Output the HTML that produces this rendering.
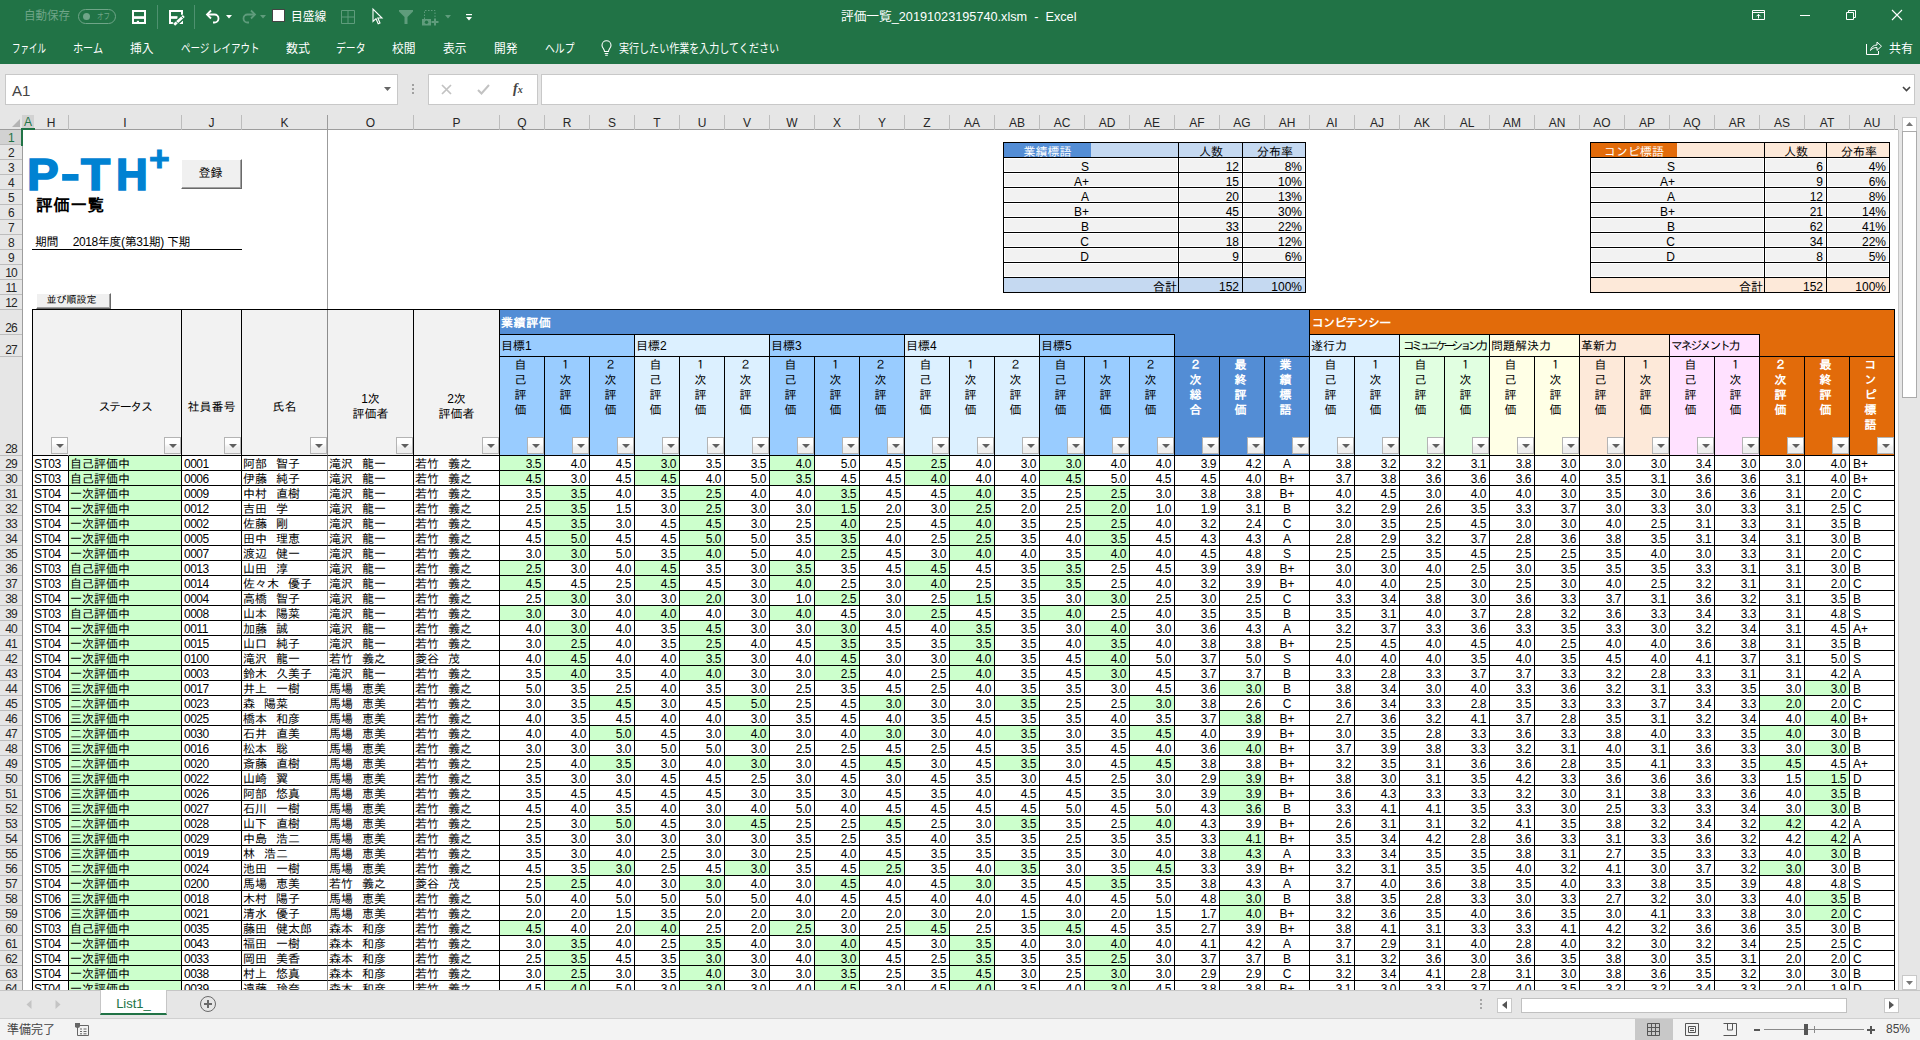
<!DOCTYPE html>
<html lang="ja"><head><meta charset="utf-8"><title>評価一覧_20191023195740.xlsm - Excel</title>
<style>

*{margin:0;padding:0;box-sizing:border-box}
html,body{width:1920px;height:1040px;overflow:hidden;background:#e6e6e6}
body{position:relative;font-family:"Liberation Sans","Noto Sans CJK JP",sans-serif;font-size:12px;color:#000}
.a{position:absolute}
#grn{left:0;top:0;width:1920px;height:64px;background:#217346;color:#fff}
#grn span{position:absolute;white-space:nowrap;line-height:16px}
#grn svg{position:absolute;overflow:visible}
.dim{color:#6fa588}
#fb{left:0;top:64px;width:1920px;height:49px;background:#e6e6e6}
.box{position:absolute;background:#fff;border:1px solid #c8c8c8}
#ch{left:0;top:113px;width:1898px;height:17px;background:#e6e6e6;border-bottom:1px solid #9d9d9d;font-family:"Liberation Sans","IPAGothic",sans-serif;color:#333}
#ch u{position:absolute;top:2px;height:15px;text-decoration:none;text-align:center;line-height:16px;color:#262626;border-right:1px solid #bdbdbd;font-size:12px}
#rh{left:0;top:130px;width:23px;height:860px;background:#e6e6e6;border-right:1px solid #9d9d9d;font-family:"Liberation Sans","IPAGothic",sans-serif;color:#333;overflow:hidden}
#rh u{position:absolute;left:0;width:22px;text-decoration:none;text-align:center;font-size:12px;line-height:11px;letter-spacing:-.8px;color:#262626;border-bottom:1px solid #bdbdbd;display:flex;align-items:flex-end;justify-content:center}
#sheet{left:23px;top:130px;width:1875px;height:860px;background:#fff;overflow:hidden;font-family:"Liberation Sans","IPAGothic",sans-serif}
#tb{position:absolute;left:9px;top:326px;width:1870px}
#tb p{display:flex;height:15px;border-left:1px solid #000;white-space:nowrap}
#tb b,#tb i{display:block;height:15px;border-right:1px solid #000;border-bottom:1px solid #000;font-weight:normal;font-style:normal;font-size:12px;line-height:17px;overflow:hidden;flex:none}
#tb b{padding-left:1px;width:86px;word-spacing:5.7px}
#tb b:nth-child(1){width:36px;letter-spacing:-.5px}
#tb b:nth-child(2){width:113px}
#tb b:nth-child(3){width:60px;padding-left:2px;letter-spacing:-.5px}
#tb b:nth-child(4){border-right-color:#8c8c8c}
#tb i{width:45px;text-align:right;padding-right:3px;letter-spacing:-.5px}
#tb i:nth-child(24){text-align:center;padding:0;letter-spacing:0}
#tb i:nth-child(37){text-align:left;padding:0 0 0 3px;letter-spacing:0}
.g{background:#cfc}
.hc{position:absolute;border-right:1px solid #000;border-bottom:1px solid #000;font-size:12px;line-height:15px;overflow:hidden}
.v{text-align:center;padding:1px 3px 0 0}
.w{color:#fff;font-weight:bold}
.f{position:absolute;right:0;bottom:1px;width:17px;height:17px;border:1px solid #b4b4b4;background:linear-gradient(#fff 35%,#eee 65%)}
.f:after{content:"";position:absolute;left:3.5px;top:6px;border:solid transparent;border-width:4px 4px 0;border-top-color:#606060}
.c1{background:#9cf}.c2{background:#dcf0ff}.c3{background:#538dd5}.c4{background:#e26b0a}
.c5{background:#e1ffe1}.c6{background:#ffffe6}.c7{background:#fde9d9}.c8{background:#ffe1ff}.c0{background:#f2f2f2}
.sm{position:absolute;font-size:12px}
.sm div{position:absolute;border-right:1px solid #000;border-bottom:1px solid #000;height:15px;line-height:19px;overflow:hidden;white-space:nowrap}
.sm .y{background:#f2f2f2;box-shadow:inset 0 0 0 1px #fff}
.btn{position:absolute;background:#f0f0f0;border:1px solid;border-color:#fff #696969 #696969 #fff;box-shadow:inset -1px -1px 0 #a0a0a0;text-align:center;white-space:nowrap}
#tabs{left:0;top:990px;width:1920px;height:28px;background:#e6e6e6;border-top:1px solid #c6c6c6}
#stat{left:0;top:1018px;width:1920px;height:22px;background:#f3f3f3;border-top:1px solid #d0d0d0;color:#444}
#vs{left:1898px;top:130px;width:22px;height:860px;background:#e6e6e6;border-left:1px solid #c6c6c6}

</style></head>
<body>
<div id="grn" class="a">
<span id="t1" class="dim" style="position:absolute;white-space:nowrap;left:24px;top:8px;transform-origin:0 50%;transform:scaleX(0.9580)">自動保存</span>
<div class="a" style="left:78px;top:9px;width:38px;height:15px;border:1px solid #6fa588;border-radius:8px"></div>
<div class="a" style="left:83px;top:13px;width:7px;height:7px;border-radius:4px;background:#6fa588"></div>
<span id="t2" class="dim" style="position:absolute;white-space:nowrap;left:97px;top:9px;transform-origin:0 50%;transform:scaleX(0.7640);font-size:8.5px;line-height:15px">オフ</span>
<svg style="left:132px;top:10px" width="14" height="14" viewBox="0 0 14 14"><rect x="1" y="1" width="12" height="12" fill="none" stroke="#fff" stroke-width="2"/><rect x="2" y="6.200" width="10" height="2.700" fill="#fff"/><rect x="4.800" y="10.800" width="2.200" height="2.200" fill="#fff"/></svg>
<div class="a" style="left:157px;top:5px;width:1px;height:24px;background:#4f9170"></div>
<svg style="left:169px;top:10px" width="16" height="16" viewBox="0 0 16 16"><path d="M13 5.500V1H1v12h4.500" fill="none" stroke="#fff" stroke-width="2"/><path d="M2 7.500h6.500" stroke="#fff" stroke-width="2.700"/><path d="M14 10.500V14h-4z" fill="#fff"/><path d="M14.800 6L5.200 14.800" stroke="#217346" stroke-width="5"/><path d="M14.800 6L5.200 14.800" stroke="#fff" stroke-width="2.800"/><path d="M12.300 6.300l2.200 2.400M7 11.200l2.200 2.400" stroke="#217346" stroke-width=".9"/></svg>
<div class="a" style="left:194px;top:5px;width:1px;height:24px;background:#4f9170"></div>
<svg style="left:205px;top:9px" width="16" height="15" viewBox="0 0 16 15"><path d="M2 5.5h7.5a4 4 0 0 1 0 8H8" fill="none" stroke="#fff" stroke-width="1.8"/><path d="M6 1.5L2 5.5l4 4" fill="none" stroke="#fff" stroke-width="1.8"/></svg>
<svg style="left:226px;top:15px" width="6" height="4" viewBox="0 0 6 4"><path d="M0 0h6L3 3.5z" fill="#fff"/></svg>
<svg style="left:241px;top:9px" width="16" height="15" viewBox="0 0 16 15"><path d="M14 5.5H6.5a4 4 0 0 0 0 8H8" fill="none" stroke="#5f9c7c" stroke-width="1.8"/><path d="M10 1.5l4 4-4 4" fill="none" stroke="#5f9c7c" stroke-width="1.8"/></svg>
<svg style="left:260px;top:15px" width="6" height="4" viewBox="0 0 6 4"><path d="M0 0h6L3 3.5z" fill="#5f9c7c"/></svg>
<div class="a" style="left:272px;top:9px;width:13px;height:13px;background:#fff;border:1px solid #444"></div>
<span id="t3" style="position:absolute;white-space:nowrap;left:290.5px;top:8.5px;transform-origin:0 50%;transform:scaleX(0.9774)">目盛線</span>
<svg style="left:341px;top:10px" width="14" height="14" viewBox="0 0 14 14"><path d="M.5.5h13v13H.5zM7 .5v13M.5 7h13" fill="none" stroke="#5f9c7c" stroke-width="1"/></svg>
<svg style="left:372px;top:8px" width="11" height="17" viewBox="0 0 11 17"><path d="M1 1v12.5l3-2.8 2.2 5 1.8-.8-2.2-4.9H10z" fill="none" stroke="#fff" stroke-width="1.1"/></svg>
<svg style="left:399px;top:10px" width="14" height="15" viewBox="0 0 14 15"><path d="M0 0h14v1.5L8.5 7v7h-3V7L0 1.5z" fill="#5f9c7c"/></svg>
<svg style="left:422px;top:10px" width="17" height="16" viewBox="0 0 17 16"><path d="M2.5 9V.5h10.5v7" fill="none" stroke="#5f9c7c" stroke-width="1" stroke-dasharray="1.5 1.5"/><rect x="0" y="9" width="9" height="6.5" fill="#5f9c7c"/><circle cx="4.5" cy="12.3" r="1.7" fill="#217346"/><path d="M13 8.5v7M9.5 12h7" stroke="#5f9c7c" stroke-width="2"/></svg>
<svg style="left:445px;top:15px" width="6" height="4" viewBox="0 0 6 4"><path d="M0 0h6L3 3.5z" fill="#5f9c7c"/></svg>
<svg style="left:465.500px;top:14px" width="6" height="7" viewBox="0 0 6 7"><path d="M0 .6h6" stroke="#fff" stroke-width="1.200"/><path d="M0 3h6L3 6.500z" fill="#fff"/></svg>
<span id="t4" style="position:absolute;white-space:nowrap;left:840.7px;top:8.5px;transform-origin:0 50%;transform:scaleX(1.0148);font-size:12.5px">評価一覧_20191023195740.xlsm&nbsp; -&nbsp; Excel</span>
<svg style="left:1752px;top:10px" width="13" height="10" viewBox="0 0 13 10"><path d="M.5.5h12v9H.5zM.5 2.500h12" fill="none" stroke="#fff" stroke-width="1"/><path d="M6.500 8.500V4.500M4.500 6.300l2-2 2 2" fill="none" stroke="#fff" stroke-width="1"/></svg>
<div class="a" style="left:1800px;top:15px;width:10px;height:1px;background:#fff"></div>
<svg style="left:1846px;top:10px" width="10" height="10" viewBox="0 0 10 10"><path d="M.5 2.500h7v7h-7z" fill="none" stroke="#fff" stroke-width="1"/><path d="M2.500 2.500v-2h7v7h-2" fill="none" stroke="#fff" stroke-width="1"/></svg>
<svg style="left:1892px;top:10px" width="10" height="10" viewBox="0 0 10 10"><path d="M0 0l10 10M10 0L0 10" fill="none" stroke="#fff" stroke-width="1.100"/></svg>
<span id="t5" class="mt" style="position:absolute;white-space:nowrap;left:12px;top:41px;transform-origin:0 50%;transform:scaleX(0.7081)">ファイル</span>
<span id="t6" class="mt" style="position:absolute;white-space:nowrap;left:72.5px;top:41px;transform-origin:0 50%;transform:scaleX(0.8417)">ホーム</span>
<span id="t7" class="mt" style="position:absolute;white-space:nowrap;left:130px;top:41px;transform-origin:0 50%;transform:scaleX(0.9785)">挿入</span>
<span id="t8" class="mt" style="position:absolute;white-space:nowrap;left:180.5px;top:41px;transform-origin:0 50%;transform:scaleX(0.7921)">ページ レイアウト</span>
<span id="t9" class="mt" style="position:absolute;white-space:nowrap;left:286px;top:41px;transform-origin:0 50%;transform:scaleX(0.9994)">数式</span>
<span id="t10" class="mt" style="position:absolute;white-space:nowrap;left:336px;top:41px;transform-origin:0 50%;transform:scaleX(0.8191)">データ</span>
<span id="t11" class="mt" style="position:absolute;white-space:nowrap;left:392px;top:41px;transform-origin:0 50%;transform:scaleX(0.9785)">校閲</span>
<span id="t12" class="mt" style="position:absolute;white-space:nowrap;left:443px;top:41px;transform-origin:0 50%;transform:scaleX(0.9785)">表示</span>
<span id="t13" class="mt" style="position:absolute;white-space:nowrap;left:494px;top:41px;transform-origin:0 50%;transform:scaleX(0.9785)">開発</span>
<span id="t14" class="mt" style="position:absolute;white-space:nowrap;left:545px;top:41px;transform-origin:0 50%;transform:scaleX(0.8191)">ヘルプ</span>
<span id="t15" class="mt" style="position:absolute;white-space:nowrap;left:618.7px;top:41px;transform-origin:0 50%;transform:scaleX(0.8364)">実行したい作業を入力してください</span>
<svg style="left:601px;top:40px" width="11" height="16" viewBox="0 0 11 16"><path d="M3.5 11.5C3.500 9 1 8 1 5.200a4.500 4.500 0 0 1 9 0C10 8 7.500 9 7.500 11.500z" fill="none" stroke="#fff" stroke-width="1.1"/><path d="M3.700 13.500h3.600M4.200 15.300h2.600" stroke="#fff" stroke-width="1.1"/></svg>
<svg style="left:1866px;top:40px" width="16" height="15" viewBox="0 0 16 15"><path d="M.5 4v10.500h12v-3.500" fill="none" stroke="#fff" stroke-width="1"/><path d="M4.500 10.500c.5-3.500 3-5.500 6.500-5.500V2l4.500 4.200L11 10.400V7.500c-3 0-5 1-6.500 3z" fill="none" stroke="#fff" stroke-width="1"/></svg>
<span id="t16" style="position:absolute;white-space:nowrap;left:1889px;top:41px;transform-origin:0 50%;transform:scaleX(0.9994)">共有</span>
</div>
<div id="fb" class="a">
<div class="box" style="left:5px;top:10px;width:393px;height:31px"></div>
<span class="a" style="left:12px;top:18px;font-size:15px;line-height:18px;color:#444;font-family:"Liberation Sans","IPAGothic",sans-serif">A1</span>
<svg class="a" style="left:384px;top:23px" width="7" height="4" viewBox="0 0 7 4"><path d="M0 0h7L3.500 4z" fill="#666"/></svg>
<div class="a" style="left:412px;top:20px;width:2px;height:2px;background:#a0a0a0;box-shadow:0 4px 0 #a0a0a0,0 8px 0 #a0a0a0"></div>
<div class="box" style="left:428px;top:10px;width:110px;height:31px"></div>
<svg class="a" style="left:441px;top:20px" width="11" height="11" viewBox="0 0 11 11"><path d="M1 1l9 9M10 1l-9 9" stroke="#c2c2c2" stroke-width="1.700"/></svg>
<svg class="a" style="left:477px;top:20px" width="13" height="11" viewBox="0 0 13 11"><path d="M1 6l3.500 3.500L12 1" fill="none" stroke="#c2c2c2" stroke-width="2"/></svg>
<span class="a" style="left:513px;top:16px;font-family:'Liberation Serif',serif;font-style:italic;font-weight:bold;font-size:14px;line-height:18px;color:#444">f<span style="font-size:10px">x</span></span>
<div class="box" style="left:541px;top:10px;width:1374px;height:31px"></div>
<svg class="a" style="left:1902px;top:22px" width="9" height="6" viewBox="0 0 9 6"><path d="M1 1l3.500 3.500L8 1" fill="none" stroke="#444" stroke-width="1.6"/></svg>
</div>
<div id="ch" class="a">
<svg class="a" style="left:12px;top:6px" width="8" height="8" viewBox="0 0 8 8"><path d="M8 0v8H0z" fill="#b4b4b4"/></svg>
<u style="left:22px;width:12px;background:#d2d2d2;color:#217346;border-right:0;height:15px;top:2px;line-height:15px">A</u>
<u style="left:34px;width:35px">H</u>
<u style="left:69px;width:113px">I</u>
<u style="left:182px;width:60px">J</u>
<u style="left:242px;width:86px;border-right-color:#9b9b9b">K</u>
<u style="left:328px;width:86px">O</u>
<u style="left:414px;width:86px">P</u>
<u style="left:500px;width:45px">Q</u>
<u style="left:545px;width:45px">R</u>
<u style="left:590px;width:45px">S</u>
<u style="left:635px;width:45px">T</u>
<u style="left:680px;width:45px">U</u>
<u style="left:725px;width:45px">V</u>
<u style="left:770px;width:45px">W</u>
<u style="left:815px;width:45px">X</u>
<u style="left:860px;width:45px">Y</u>
<u style="left:905px;width:45px">Z</u>
<u style="left:950px;width:45px">AA</u>
<u style="left:995px;width:45px">AB</u>
<u style="left:1040px;width:45px">AC</u>
<u style="left:1085px;width:45px">AD</u>
<u style="left:1130px;width:45px">AE</u>
<u style="left:1175px;width:45px">AF</u>
<u style="left:1220px;width:45px">AG</u>
<u style="left:1265px;width:45px">AH</u>
<u style="left:1310px;width:45px">AI</u>
<u style="left:1355px;width:45px">AJ</u>
<u style="left:1400px;width:45px">AK</u>
<u style="left:1445px;width:45px">AL</u>
<u style="left:1490px;width:45px">AM</u>
<u style="left:1535px;width:45px">AN</u>
<u style="left:1580px;width:45px">AO</u>
<u style="left:1625px;width:45px">AP</u>
<u style="left:1670px;width:45px">AQ</u>
<u style="left:1715px;width:45px">AR</u>
<u style="left:1760px;width:45px">AS</u>
<u style="left:1805px;width:45px">AT</u>
<u style="left:1850px;width:45px">AU</u>
<u style="left:1895px;width:3px;border-right:0"></u>
</div>
<div id="rh" class="a">
<u style="top:0px;height:15px;background:#d2d2d2;color:#217346">1</u>
<u style="top:15px;height:15px">2</u>
<u style="top:30px;height:15px">3</u>
<u style="top:45px;height:15px">4</u>
<u style="top:60px;height:15px">5</u>
<u style="top:75px;height:15px">6</u>
<u style="top:90px;height:15px">7</u>
<u style="top:105px;height:15px">8</u>
<u style="top:120px;height:15px">9</u>
<u style="top:135px;height:15px">10</u>
<u style="top:150px;height:15px">11</u>
<u style="top:165px;height:15px">12</u>
<u style="top:180px;height:25px">26</u>
<u style="top:205px;height:22px">27</u>
<u style="top:227px;height:99px">28</u>
<u style="top:326px;height:15px">29</u>
<u style="top:341px;height:15px">30</u>
<u style="top:356px;height:15px">31</u>
<u style="top:371px;height:15px">32</u>
<u style="top:386px;height:15px">33</u>
<u style="top:401px;height:15px">34</u>
<u style="top:416px;height:15px">35</u>
<u style="top:431px;height:15px">36</u>
<u style="top:446px;height:15px">37</u>
<u style="top:461px;height:15px">38</u>
<u style="top:476px;height:15px">39</u>
<u style="top:491px;height:15px">40</u>
<u style="top:506px;height:15px">41</u>
<u style="top:521px;height:15px">42</u>
<u style="top:536px;height:15px">43</u>
<u style="top:551px;height:15px">44</u>
<u style="top:566px;height:15px">45</u>
<u style="top:581px;height:15px">46</u>
<u style="top:596px;height:15px">47</u>
<u style="top:611px;height:15px">48</u>
<u style="top:626px;height:15px">49</u>
<u style="top:641px;height:15px">50</u>
<u style="top:656px;height:15px">51</u>
<u style="top:671px;height:15px">52</u>
<u style="top:686px;height:15px">53</u>
<u style="top:701px;height:15px">54</u>
<u style="top:716px;height:15px">55</u>
<u style="top:731px;height:15px">56</u>
<u style="top:746px;height:15px">57</u>
<u style="top:761px;height:15px">58</u>
<u style="top:776px;height:15px">59</u>
<u style="top:791px;height:15px">60</u>
<u style="top:806px;height:15px">61</u>
<u style="top:821px;height:15px">62</u>
<u style="top:836px;height:15px">63</u>
<u style="top:851px;height:15px">64</u>
<u style="top:866px;height:15px">65</u>
</div>
<div class="a" style="left:21px;top:128px;width:14px;height:2px;background:#217346"></div><div class="a" style="left:21px;top:128px;width:2px;height:18px;background:#217346"></div>
<div id="vs" class="a">
<div class="box" style="left:3px;top:-13px;width:15px;height:15px;border-color:#c8c8c8"></div>
<svg class="a" style="left:7px;top:-8px" width="7" height="4" viewBox="0 0 7 4"><path d="M0 4h7L3.500 0z" fill="#777"/></svg>
<div class="box" style="left:3px;top:1px;width:15px;height:267px;border-color:#ababab"></div>
<div class="box" style="left:3px;top:845px;width:15px;height:15px;border-color:#c8c8c8"></div>
<svg class="a" style="left:7px;top:851px" width="7" height="4" viewBox="0 0 7 4"><path d="M0 0h7L3.500 4z" fill="#777"/></svg>
</div>
<div id="sheet" class="a">
<div class="a" style="left:304px;top:0;width:1px;height:180px;background:#9b9b9b"></div>
<div class="a" id="logo" style="left:0;top:0;font-family:'Liberation Sans',sans-serif;font-weight:bold;font-size:44px;line-height:44px;color:#0082d2;-webkit-text-stroke:1.6px #0082d2"><span class="a" style="left:4px;top:23px;transform-origin:0 0;transform:scaleX(1.08)">P</span><span class="a" style="left:38px;top:22px;transform-origin:0 0;transform:scaleX(1.28)">-</span><span class="a" style="left:58px;top:23px;transform-origin:0 0;transform:scaleX(1.085)">T</span><span class="a" style="left:93px;top:23px;transform-origin:0 0;transform:scaleX(1)">H</span><span class="a" style="left:126px;top:12px;font-size:35.5px;line-height:35.500px;-webkit-text-stroke:1px #0082d2">+</span></div>
<div class="btn" style="left:158px;top:29px;width:61px;height:30px;line-height:26px;font-size:12px;padding-right:2px">登録</div>
<div class="a" style="left:13px;top:66px;font-size:16.5px;line-height:18px;font-weight:bold;letter-spacing:.7px;white-space:nowrap">評価一覧</div>
<div class="a" style="left:9px;top:105px;width:210px;height:15px;border-bottom:1px solid #000;font-size:12px;line-height:15px;padding-left:3px;letter-spacing:-.4px;white-space:pre">期間　 2018年度(第31期) 下期</div>
<div class="btn" style="left:13px;top:163px;width:75px;height:16px;line-height:12px;font-size:10px;padding-right:4px">並び順設定</div>
<div class="sm" style="left:980px;top:12px;width:303px;height:151px;background:#000"><div style="left:1px;top:1px;width:174px;background:#c5d9f1;border-right:0"></div><div style="left:1px;top:1px;width:87px;background:#538dd5;color:#fff;text-align:center;border-right:0">業績標語</div><div style="left:175px;top:1px;width:1px;border-bottom:1px solid #000"></div><div style="left:176px;top:1px;width:64px;background:#c5d9f1;text-align:center;padding:0 0px;padding-left:1px">人数</div><div style="left:240px;top:1px;width:63px;background:#c5d9f1;text-align:center;padding:0 0px;padding-left:2px">分布率</div><div class="y" style="left:1px;top:16px;width:175px;text-align:right;padding:0 0px;padding-right:89px">S</div><div class="y" style="left:176px;top:16px;width:64px;text-align:right;padding:0 3px">12</div><div class="y" style="left:240px;top:16px;width:63px;text-align:right;padding:0 3px">8%</div><div class="y" style="left:1px;top:31px;width:175px;text-align:right;padding:0 0px;padding-right:89px">A+</div><div class="y" style="left:176px;top:31px;width:64px;text-align:right;padding:0 3px">15</div><div class="y" style="left:240px;top:31px;width:63px;text-align:right;padding:0 3px">10%</div><div class="y" style="left:1px;top:46px;width:175px;text-align:right;padding:0 0px;padding-right:89px">A</div><div class="y" style="left:176px;top:46px;width:64px;text-align:right;padding:0 3px">20</div><div class="y" style="left:240px;top:46px;width:63px;text-align:right;padding:0 3px">13%</div><div class="y" style="left:1px;top:61px;width:175px;text-align:right;padding:0 0px;padding-right:89px">B+</div><div class="y" style="left:176px;top:61px;width:64px;text-align:right;padding:0 3px">45</div><div class="y" style="left:240px;top:61px;width:63px;text-align:right;padding:0 3px">30%</div><div class="y" style="left:1px;top:76px;width:175px;text-align:right;padding:0 0px;padding-right:89px">B</div><div class="y" style="left:176px;top:76px;width:64px;text-align:right;padding:0 3px">33</div><div class="y" style="left:240px;top:76px;width:63px;text-align:right;padding:0 3px">22%</div><div class="y" style="left:1px;top:91px;width:175px;text-align:right;padding:0 0px;padding-right:89px">C</div><div class="y" style="left:176px;top:91px;width:64px;text-align:right;padding:0 3px">18</div><div class="y" style="left:240px;top:91px;width:63px;text-align:right;padding:0 3px">12%</div><div class="y" style="left:1px;top:106px;width:175px;text-align:right;padding:0 0px;padding-right:89px">D</div><div class="y" style="left:176px;top:106px;width:64px;text-align:right;padding:0 3px">9</div><div class="y" style="left:240px;top:106px;width:63px;text-align:right;padding:0 3px">6%</div><div class="y" style="left:1px;top:121px;width:175px;text-align:right;padding:0 3px"></div><div class="y" style="left:176px;top:121px;width:64px;text-align:right;padding:0 3px"></div><div class="y" style="left:240px;top:121px;width:63px;text-align:right;padding:0 3px"></div><div style="left:1px;top:136px;width:175px;background:#c5d9f1;text-align:right;padding:0 1px">合計</div><div style="left:176px;top:136px;width:64px;background:#c5d9f1;text-align:right;padding:0 3px">152</div><div style="left:240px;top:136px;width:63px;background:#c5d9f1;text-align:right;padding:0 3px">100%</div></div>
<div class="sm" style="left:1567px;top:12px;width:300px;height:151px;background:#000"><div style="left:1px;top:1px;width:173px;background:#fde9d9;border-right:0"></div><div style="left:1px;top:1px;width:86px;background:#e26b0a;color:#fff;text-align:center;border-right:0">コンピ標語</div><div style="left:174px;top:1px;width:1px;border-bottom:1px solid #000"></div><div style="left:175px;top:1px;width:62px;background:#fde9d9;text-align:center;padding:0 0px;padding-left:1px">人数</div><div style="left:237px;top:1px;width:63px;background:#fde9d9;text-align:center;padding:0 0px;padding-left:2px">分布率</div><div class="y" style="left:1px;top:16px;width:174px;text-align:right;padding:0 0px;padding-right:89px">S</div><div class="y" style="left:175px;top:16px;width:62px;text-align:right;padding:0 3px">6</div><div class="y" style="left:237px;top:16px;width:63px;text-align:right;padding:0 3px">4%</div><div class="y" style="left:1px;top:31px;width:174px;text-align:right;padding:0 0px;padding-right:89px">A+</div><div class="y" style="left:175px;top:31px;width:62px;text-align:right;padding:0 3px">9</div><div class="y" style="left:237px;top:31px;width:63px;text-align:right;padding:0 3px">6%</div><div class="y" style="left:1px;top:46px;width:174px;text-align:right;padding:0 0px;padding-right:89px">A</div><div class="y" style="left:175px;top:46px;width:62px;text-align:right;padding:0 3px">12</div><div class="y" style="left:237px;top:46px;width:63px;text-align:right;padding:0 3px">8%</div><div class="y" style="left:1px;top:61px;width:174px;text-align:right;padding:0 0px;padding-right:89px">B+</div><div class="y" style="left:175px;top:61px;width:62px;text-align:right;padding:0 3px">21</div><div class="y" style="left:237px;top:61px;width:63px;text-align:right;padding:0 3px">14%</div><div class="y" style="left:1px;top:76px;width:174px;text-align:right;padding:0 0px;padding-right:89px">B</div><div class="y" style="left:175px;top:76px;width:62px;text-align:right;padding:0 3px">62</div><div class="y" style="left:237px;top:76px;width:63px;text-align:right;padding:0 3px">41%</div><div class="y" style="left:1px;top:91px;width:174px;text-align:right;padding:0 0px;padding-right:89px">C</div><div class="y" style="left:175px;top:91px;width:62px;text-align:right;padding:0 3px">34</div><div class="y" style="left:237px;top:91px;width:63px;text-align:right;padding:0 3px">22%</div><div class="y" style="left:1px;top:106px;width:174px;text-align:right;padding:0 0px;padding-right:89px">D</div><div class="y" style="left:175px;top:106px;width:62px;text-align:right;padding:0 3px">8</div><div class="y" style="left:237px;top:106px;width:63px;text-align:right;padding:0 3px">5%</div><div class="y" style="left:1px;top:121px;width:174px;text-align:right;padding:0 3px"></div><div class="y" style="left:175px;top:121px;width:62px;text-align:right;padding:0 3px"></div><div class="y" style="left:237px;top:121px;width:63px;text-align:right;padding:0 3px"></div><div style="left:1px;top:136px;width:174px;background:#fde9d9;text-align:right;padding:0 1px">合計</div><div style="left:175px;top:136px;width:62px;background:#fde9d9;text-align:right;padding:0 3px">152</div><div style="left:237px;top:136px;width:63px;background:#fde9d9;text-align:right;padding:0 3px">100%</div></div>
<div class="a" style="left:9px;top:179px;width:1863px;height:1px;background:#000"></div>
<div class="a" style="left:9px;top:179px;width:1px;height:147px;background:#000"></div>
<div class="hc c0" style="left:10px;top:180px;width:36px;height:146px;text-align:center;padding-top:90px;border-right-color:#f2f2f2"><s class="f"></s></div>
<div class="hc c0" style="left:46px;top:180px;width:113px;height:146px;text-align:center;padding-top:90px"><span style="letter-spacing:-1.4px">ステータス</span><s class="f"></s></div>
<div class="hc c0" style="left:159px;top:180px;width:60px;height:146px;text-align:center;padding-top:90px">社員番号<s class="f"></s></div>
<div class="hc c0" style="left:219px;top:180px;width:86px;height:146px;text-align:center;padding-top:90px;border-right-color:#8c8c8c">氏名<s class="f"></s></div>
<div class="hc c0" style="left:305px;top:180px;width:86px;height:146px;text-align:center;padding-top:82px">1次<br>評価者<s class="f"></s></div>
<div class="hc c0" style="left:391px;top:180px;width:86px;height:146px;text-align:center;padding-top:82px">2次<br>評価者<s class="f"></s></div>
<div class="hc c3 w" style="left:477px;top:180px;width:810px;height:25px;padding:6px 0 0 1px;letter-spacing:.6px">業績評価</div>
<div class="hc c4 w" style="left:1287px;top:180px;width:585px;height:25px;padding:6px 0 0 2px;letter-spacing:-.8px">コンピテンシー</div>
<div class="hc c3" style="left:1152px;top:204px;width:135px;height:23px;border-top:0"></div>
<div class="hc c4" style="left:1737px;top:204px;width:135px;height:23px;border-top:0"></div>
<div class="hc c1" style="left:477px;top:205px;width:135px;height:22px;padding:4px 0 0 1px">目標1</div>
<div class="hc c2" style="left:612px;top:205px;width:135px;height:22px;padding:4px 0 0 1px">目標2</div>
<div class="hc c1" style="left:747px;top:205px;width:135px;height:22px;padding:4px 0 0 1px">目標3</div>
<div class="hc c2" style="left:882px;top:205px;width:135px;height:22px;padding:4px 0 0 1px">目標4</div>
<div class="hc c1" style="left:1017px;top:205px;width:135px;height:22px;padding:4px 0 0 1px">目標5</div>
<div class="hc c2" style="left:1287px;top:205px;width:90px;height:22px;white-space:nowrap;padding:4px 0 0 1px">遂行力</div>
<div class="hc c5" style="left:1377px;top:205px;width:90px;height:22px;white-space:nowrap;padding:4px 0 0 1px;letter-spacing:-3.9px;padding-left:3px">コミュニケーション力</div>
<div class="hc c6" style="left:1467px;top:205px;width:90px;height:22px;white-space:nowrap;padding:4px 0 0 1px">問題解決力</div>
<div class="hc c7" style="left:1557px;top:205px;width:90px;height:22px;white-space:nowrap;padding:4px 0 0 1px">革新力</div>
<div class="hc c8" style="left:1647px;top:205px;width:90px;height:22px;white-space:nowrap;padding:4px 0 0 1px;letter-spacing:-2.4px">マネジメント力</div>
<div class="hc c1 v" style="left:477px;top:227px;width:45px;height:99px">自<br>己<br>評<br>価<s class="f"></s></div>
<div class="hc c1 v" style="left:522px;top:227px;width:45px;height:99px">１<br>次<br>評<br>価<s class="f"></s></div>
<div class="hc c1 v" style="left:567px;top:227px;width:45px;height:99px">２<br>次<br>評<br>価<s class="f"></s></div>
<div class="hc c2 v" style="left:612px;top:227px;width:45px;height:99px">自<br>己<br>評<br>価<s class="f"></s></div>
<div class="hc c2 v" style="left:657px;top:227px;width:45px;height:99px">１<br>次<br>評<br>価<s class="f"></s></div>
<div class="hc c2 v" style="left:702px;top:227px;width:45px;height:99px">２<br>次<br>評<br>価<s class="f"></s></div>
<div class="hc c1 v" style="left:747px;top:227px;width:45px;height:99px">自<br>己<br>評<br>価<s class="f"></s></div>
<div class="hc c1 v" style="left:792px;top:227px;width:45px;height:99px">１<br>次<br>評<br>価<s class="f"></s></div>
<div class="hc c1 v" style="left:837px;top:227px;width:45px;height:99px">２<br>次<br>評<br>価<s class="f"></s></div>
<div class="hc c2 v" style="left:882px;top:227px;width:45px;height:99px">自<br>己<br>評<br>価<s class="f"></s></div>
<div class="hc c2 v" style="left:927px;top:227px;width:45px;height:99px">１<br>次<br>評<br>価<s class="f"></s></div>
<div class="hc c2 v" style="left:972px;top:227px;width:45px;height:99px">２<br>次<br>評<br>価<s class="f"></s></div>
<div class="hc c1 v" style="left:1017px;top:227px;width:45px;height:99px">自<br>己<br>評<br>価<s class="f"></s></div>
<div class="hc c1 v" style="left:1062px;top:227px;width:45px;height:99px">１<br>次<br>評<br>価<s class="f"></s></div>
<div class="hc c1 v" style="left:1107px;top:227px;width:45px;height:99px">２<br>次<br>評<br>価<s class="f"></s></div>
<div class="hc c3 v w" style="left:1152px;top:227px;width:45px;height:99px">２<br>次<br>総<br>合<s class="f"></s></div>
<div class="hc c3 v w" style="left:1197px;top:227px;width:45px;height:99px">最<br>終<br>評<br>価<s class="f"></s></div>
<div class="hc c3 v w" style="left:1242px;top:227px;width:45px;height:99px">業<br>績<br>標<br>語<s class="f"></s></div>
<div class="hc c2 v" style="left:1287px;top:227px;width:45px;height:99px">自<br>己<br>評<br>価<s class="f"></s></div>
<div class="hc c2 v" style="left:1332px;top:227px;width:45px;height:99px">１<br>次<br>評<br>価<s class="f"></s></div>
<div class="hc c5 v" style="left:1377px;top:227px;width:45px;height:99px">自<br>己<br>評<br>価<s class="f"></s></div>
<div class="hc c5 v" style="left:1422px;top:227px;width:45px;height:99px">１<br>次<br>評<br>価<s class="f"></s></div>
<div class="hc c6 v" style="left:1467px;top:227px;width:45px;height:99px">自<br>己<br>評<br>価<s class="f"></s></div>
<div class="hc c6 v" style="left:1512px;top:227px;width:45px;height:99px">１<br>次<br>評<br>価<s class="f"></s></div>
<div class="hc c7 v" style="left:1557px;top:227px;width:45px;height:99px">自<br>己<br>評<br>価<s class="f"></s></div>
<div class="hc c7 v" style="left:1602px;top:227px;width:45px;height:99px">１<br>次<br>評<br>価<s class="f"></s></div>
<div class="hc c8 v" style="left:1647px;top:227px;width:45px;height:99px">自<br>己<br>評<br>価<s class="f"></s></div>
<div class="hc c8 v" style="left:1692px;top:227px;width:45px;height:99px">１<br>次<br>評<br>価<s class="f"></s></div>
<div class="hc c4 v w" style="left:1737px;top:227px;width:45px;height:99px">２<br>次<br>評<br>価<s class="f"></s></div>
<div class="hc c4 v w" style="left:1782px;top:227px;width:45px;height:99px">最<br>終<br>評<br>価<s class="f"></s></div>
<div class="hc c4 v w" style="left:1827px;top:227px;width:45px;height:99px">コ<br>ン<br>ピ<br>標<br>語<s class="f"></s></div>
<div id="tb">
<p><b>ST03</b><b class="g">自己評価中</b><b>0001</b><b>阿部 智子</b><b>滝沢 龍一</b><b>若竹 義之</b><i class="g">3.5</i><i>4.0</i><i>4.5</i><i class="g">3.0</i><i>3.5</i><i>3.5</i><i class="g">4.0</i><i>5.0</i><i>4.5</i><i class="g">2.5</i><i>4.0</i><i>3.0</i><i class="g">3.0</i><i>4.0</i><i>4.0</i><i>3.9</i><i>4.2</i><i>A</i><i>3.8</i><i>3.2</i><i>3.2</i><i>3.1</i><i>3.8</i><i>3.0</i><i>3.0</i><i>3.0</i><i>3.4</i><i>3.0</i><i>3.0</i><i>4.0</i><i>B+</i></p>
<p><b>ST03</b><b class="g">自己評価中</b><b>0006</b><b>伊藤 純子</b><b>滝沢 龍一</b><b>若竹 義之</b><i class="g">4.5</i><i>3.0</i><i>4.5</i><i class="g">4.5</i><i>4.0</i><i>5.0</i><i class="g">3.5</i><i>4.5</i><i>4.5</i><i class="g">4.0</i><i>4.0</i><i>4.0</i><i class="g">4.5</i><i>5.0</i><i>4.5</i><i>4.5</i><i>4.0</i><i>B+</i><i>3.7</i><i>3.8</i><i>3.6</i><i>3.6</i><i>3.6</i><i>4.0</i><i>3.5</i><i>3.1</i><i>3.6</i><i>3.6</i><i>3.1</i><i>4.0</i><i>B+</i></p>
<p><b>ST04</b><b class="g">一次評価中</b><b>0009</b><b>中村 直樹</b><b>滝沢 龍一</b><b>若竹 義之</b><i>3.5</i><i class="g">3.5</i><i>4.0</i><i>3.5</i><i class="g">2.5</i><i>4.0</i><i>4.0</i><i class="g">3.5</i><i>4.5</i><i>4.5</i><i class="g">4.0</i><i>3.5</i><i>2.5</i><i class="g">2.5</i><i>3.0</i><i>3.8</i><i>3.8</i><i>B+</i><i>4.0</i><i>4.5</i><i>3.0</i><i>4.0</i><i>4.0</i><i>3.0</i><i>3.5</i><i>3.0</i><i>3.6</i><i>3.6</i><i>3.1</i><i>2.0</i><i>C</i></p>
<p><b>ST04</b><b class="g">一次評価中</b><b>0012</b><b>吉田 学</b><b>滝沢 龍一</b><b>若竹 義之</b><i>2.5</i><i class="g">3.5</i><i>1.5</i><i>3.0</i><i class="g">2.5</i><i>3.0</i><i>3.0</i><i class="g">1.5</i><i>2.0</i><i>3.0</i><i class="g">2.5</i><i>2.0</i><i>2.5</i><i class="g">2.0</i><i>1.0</i><i>1.9</i><i>3.1</i><i>B</i><i>3.2</i><i>2.9</i><i>2.6</i><i>3.5</i><i>3.3</i><i>3.7</i><i>3.0</i><i>3.3</i><i>3.0</i><i>3.3</i><i>3.1</i><i>2.5</i><i>C</i></p>
<p><b>ST04</b><b class="g">一次評価中</b><b>0002</b><b>佐藤 剛</b><b>滝沢 龍一</b><b>若竹 義之</b><i>4.5</i><i class="g">3.5</i><i>3.0</i><i>4.5</i><i class="g">4.5</i><i>3.0</i><i>2.5</i><i class="g">4.0</i><i>2.5</i><i>4.5</i><i class="g">4.0</i><i>3.5</i><i>2.5</i><i class="g">2.5</i><i>4.0</i><i>3.2</i><i>2.4</i><i>C</i><i>3.0</i><i>3.5</i><i>2.5</i><i>4.5</i><i>3.0</i><i>3.0</i><i>4.0</i><i>2.5</i><i>3.1</i><i>3.3</i><i>3.1</i><i>3.5</i><i>B</i></p>
<p><b>ST04</b><b class="g">一次評価中</b><b>0005</b><b>田中 理恵</b><b>滝沢 龍一</b><b>若竹 義之</b><i>4.5</i><i class="g">5.0</i><i>4.5</i><i>4.5</i><i class="g">5.0</i><i>5.0</i><i>3.5</i><i class="g">3.5</i><i>4.0</i><i>2.5</i><i class="g">2.5</i><i>3.5</i><i>4.0</i><i class="g">3.5</i><i>4.5</i><i>4.3</i><i>4.3</i><i>A</i><i>2.8</i><i>2.9</i><i>3.2</i><i>3.7</i><i>2.8</i><i>3.6</i><i>3.8</i><i>3.5</i><i>3.1</i><i>3.4</i><i>3.1</i><i>3.0</i><i>B</i></p>
<p><b>ST04</b><b class="g">一次評価中</b><b>0007</b><b>渡辺 健一</b><b>滝沢 龍一</b><b>若竹 義之</b><i>3.0</i><i class="g">3.0</i><i>5.0</i><i>3.5</i><i class="g">4.0</i><i>5.0</i><i>4.0</i><i class="g">2.5</i><i>4.5</i><i>3.0</i><i class="g">4.0</i><i>4.0</i><i>3.5</i><i class="g">4.0</i><i>4.0</i><i>4.5</i><i>4.8</i><i>S</i><i>2.5</i><i>2.5</i><i>3.5</i><i>4.5</i><i>2.5</i><i>2.5</i><i>3.5</i><i>4.0</i><i>3.0</i><i>3.3</i><i>3.1</i><i>2.0</i><i>C</i></p>
<p><b>ST03</b><b class="g">自己評価中</b><b>0013</b><b>山田 淳</b><b>滝沢 龍一</b><b>若竹 義之</b><i class="g">2.5</i><i>3.0</i><i>4.0</i><i class="g">4.5</i><i>3.5</i><i>3.0</i><i class="g">3.5</i><i>3.5</i><i>4.5</i><i class="g">4.5</i><i>4.5</i><i>3.5</i><i class="g">3.5</i><i>2.5</i><i>4.5</i><i>3.9</i><i>3.9</i><i>B+</i><i>3.0</i><i>3.0</i><i>4.0</i><i>2.5</i><i>3.0</i><i>3.5</i><i>3.5</i><i>3.5</i><i>3.3</i><i>3.1</i><i>3.1</i><i>3.0</i><i>B</i></p>
<p><b>ST03</b><b class="g">自己評価中</b><b>0014</b><b>佐々木 優子</b><b>滝沢 龍一</b><b>若竹 義之</b><i class="g">4.5</i><i>4.5</i><i>2.5</i><i class="g">4.5</i><i>4.5</i><i>3.0</i><i class="g">4.0</i><i>2.5</i><i>3.0</i><i class="g">4.0</i><i>2.5</i><i>3.5</i><i class="g">3.5</i><i>2.5</i><i>4.0</i><i>3.2</i><i>3.9</i><i>B+</i><i>4.0</i><i>4.0</i><i>2.5</i><i>3.0</i><i>2.5</i><i>3.0</i><i>4.0</i><i>2.5</i><i>3.2</i><i>3.1</i><i>3.1</i><i>2.0</i><i>C</i></p>
<p><b>ST04</b><b class="g">一次評価中</b><b>0004</b><b>高橋 智子</b><b>滝沢 龍一</b><b>若竹 義之</b><i>2.5</i><i class="g">3.0</i><i>3.0</i><i>3.0</i><i class="g">2.0</i><i>3.0</i><i>1.0</i><i class="g">2.5</i><i>3.0</i><i>2.5</i><i class="g">1.5</i><i>3.5</i><i>3.0</i><i class="g">3.0</i><i>2.5</i><i>3.0</i><i>2.5</i><i>C</i><i>3.3</i><i>3.4</i><i>3.8</i><i>3.0</i><i>3.6</i><i>3.3</i><i>3.7</i><i>3.1</i><i>3.6</i><i>3.2</i><i>3.1</i><i>3.5</i><i>B</i></p>
<p><b>ST03</b><b class="g">自己評価中</b><b>0008</b><b>山本 陽菜</b><b>滝沢 龍一</b><b>若竹 義之</b><i class="g">3.0</i><i>3.0</i><i>4.0</i><i class="g">4.0</i><i>4.0</i><i>3.0</i><i class="g">4.0</i><i>4.5</i><i>3.0</i><i class="g">2.5</i><i>4.5</i><i>3.5</i><i class="g">4.0</i><i>2.5</i><i>4.0</i><i>3.5</i><i>3.5</i><i>B</i><i>3.5</i><i>3.1</i><i>4.0</i><i>3.7</i><i>2.8</i><i>3.2</i><i>3.6</i><i>3.3</i><i>3.4</i><i>3.3</i><i>3.1</i><i>4.8</i><i>S</i></p>
<p><b>ST04</b><b class="g">一次評価中</b><b>0011</b><b>加藤 誠</b><b>滝沢 龍一</b><b>若竹 義之</b><i>4.0</i><i class="g">3.0</i><i>4.0</i><i>3.5</i><i class="g">4.5</i><i>3.0</i><i>3.0</i><i class="g">3.0</i><i>4.5</i><i>4.0</i><i class="g">3.5</i><i>3.5</i><i>3.0</i><i class="g">4.0</i><i>3.0</i><i>3.6</i><i>4.3</i><i>A</i><i>3.2</i><i>3.7</i><i>3.3</i><i>3.6</i><i>3.3</i><i>3.5</i><i>3.3</i><i>3.0</i><i>3.2</i><i>3.4</i><i>3.1</i><i>4.5</i><i>A+</i></p>
<p><b>ST04</b><b class="g">一次評価中</b><b>0015</b><b>山口 純子</b><b>滝沢 龍一</b><b>若竹 義之</b><i>3.0</i><i class="g">2.5</i><i>4.0</i><i>3.5</i><i class="g">2.5</i><i>4.0</i><i>4.5</i><i class="g">3.5</i><i>3.5</i><i>3.5</i><i class="g">3.5</i><i>3.5</i><i>4.0</i><i class="g">3.5</i><i>4.0</i><i>3.8</i><i>3.8</i><i>B+</i><i>2.5</i><i>4.5</i><i>4.0</i><i>4.5</i><i>4.0</i><i>2.5</i><i>4.0</i><i>4.0</i><i>3.6</i><i>3.8</i><i>3.1</i><i>3.5</i><i>B</i></p>
<p><b>ST04</b><b class="g">一次評価中</b><b>0100</b><b>滝沢 龍一</b><b>若竹 義之</b><b>菱谷 茂</b><i>4.0</i><i class="g">4.5</i><i>4.0</i><i>4.0</i><i class="g">3.5</i><i>3.0</i><i>4.0</i><i class="g">4.5</i><i>3.0</i><i>3.0</i><i class="g">4.0</i><i>3.5</i><i>4.5</i><i class="g">4.0</i><i>5.0</i><i>3.7</i><i>5.0</i><i>S</i><i>4.0</i><i>4.0</i><i>4.0</i><i>3.5</i><i>4.0</i><i>3.5</i><i>4.5</i><i>4.0</i><i>4.1</i><i>3.7</i><i>3.1</i><i>5.0</i><i>S</i></p>
<p><b>ST04</b><b class="g">一次評価中</b><b>0003</b><b>鈴木 久美子</b><b>滝沢 龍一</b><b>若竹 義之</b><i>3.5</i><i class="g">4.0</i><i>3.5</i><i>4.0</i><i class="g">4.0</i><i>3.0</i><i>3.0</i><i class="g">2.5</i><i>4.0</i><i>2.5</i><i class="g">4.0</i><i>3.5</i><i>4.5</i><i class="g">3.0</i><i>4.5</i><i>3.7</i><i>3.7</i><i>B</i><i>3.3</i><i>2.8</i><i>3.3</i><i>3.7</i><i>3.7</i><i>3.3</i><i>3.2</i><i>2.8</i><i>3.3</i><i>3.1</i><i>3.1</i><i>4.2</i><i>A</i></p>
<p><b>ST06</b><b class="g">三次評価中</b><b>0017</b><b>井上 一樹</b><b>馬場 恵美</b><b>若竹 義之</b><i>5.0</i><i>3.5</i><i>2.5</i><i>4.0</i><i>3.5</i><i>3.0</i><i>2.5</i><i>3.5</i><i>4.5</i><i>2.5</i><i>4.0</i><i>3.5</i><i>3.5</i><i>3.0</i><i>4.5</i><i>3.6</i><i class="g">3.0</i><i>B</i><i>3.8</i><i>3.4</i><i>3.0</i><i>4.0</i><i>3.3</i><i>3.6</i><i>3.2</i><i>3.1</i><i>3.3</i><i>3.5</i><i>3.0</i><i class="g">3.0</i><i>B</i></p>
<p><b>ST05</b><b class="g">二次評価中</b><b>0023</b><b>森 陽菜</b><b>馬場 恵美</b><b>若竹 義之</b><i>3.0</i><i>3.5</i><i class="g">4.5</i><i>3.0</i><i>4.5</i><i class="g">5.0</i><i>2.5</i><i>4.5</i><i class="g">3.0</i><i>3.0</i><i>3.0</i><i class="g">3.5</i><i>2.5</i><i>2.5</i><i class="g">3.0</i><i>3.8</i><i>2.6</i><i>C</i><i>3.6</i><i>3.4</i><i>3.3</i><i>2.8</i><i>3.5</i><i>3.3</i><i>3.3</i><i>3.7</i><i>3.4</i><i>3.3</i><i class="g">2.0</i><i>2.0</i><i>C</i></p>
<p><b>ST06</b><b class="g">三次評価中</b><b>0025</b><b>橋本 和彦</b><b>馬場 恵美</b><b>若竹 義之</b><i>4.0</i><i>3.5</i><i>4.5</i><i>4.0</i><i>4.0</i><i>3.0</i><i>3.5</i><i>4.5</i><i>4.0</i><i>3.5</i><i>4.5</i><i>3.5</i><i>3.5</i><i>4.0</i><i>3.5</i><i>3.7</i><i class="g">3.8</i><i>B+</i><i>2.7</i><i>3.6</i><i>3.2</i><i>4.1</i><i>3.7</i><i>2.8</i><i>3.5</i><i>3.1</i><i>3.2</i><i>3.4</i><i>4.0</i><i class="g">4.0</i><i>B+</i></p>
<p><b>ST05</b><b class="g">二次評価中</b><b>0030</b><b>石井 直美</b><b>馬場 恵美</b><b>若竹 義之</b><i>4.0</i><i>4.0</i><i class="g">5.0</i><i>4.5</i><i>3.0</i><i class="g">4.0</i><i>3.0</i><i>4.0</i><i class="g">3.0</i><i>3.0</i><i>4.0</i><i class="g">3.5</i><i>3.0</i><i>3.5</i><i class="g">4.5</i><i>4.0</i><i>3.9</i><i>B+</i><i>3.0</i><i>3.5</i><i>2.8</i><i>3.3</i><i>3.6</i><i>3.3</i><i>3.8</i><i>4.0</i><i>3.3</i><i>3.5</i><i class="g">4.0</i><i>3.0</i><i>B</i></p>
<p><b>ST06</b><b class="g">三次評価中</b><b>0016</b><b>松本 聡</b><b>馬場 恵美</b><b>若竹 義之</b><i>3.0</i><i>3.0</i><i>3.0</i><i>5.0</i><i>5.0</i><i>3.0</i><i>2.5</i><i>2.5</i><i>4.5</i><i>2.5</i><i>4.5</i><i>3.5</i><i>3.5</i><i>4.5</i><i>4.0</i><i>3.6</i><i class="g">4.0</i><i>B+</i><i>3.7</i><i>3.9</i><i>3.8</i><i>3.3</i><i>3.2</i><i>3.1</i><i>4.0</i><i>3.1</i><i>3.6</i><i>3.3</i><i>3.0</i><i class="g">3.0</i><i>B</i></p>
<p><b>ST05</b><b class="g">二次評価中</b><b>0020</b><b>斎藤 直樹</b><b>馬場 恵美</b><b>若竹 義之</b><i>2.5</i><i>4.0</i><i class="g">3.5</i><i>3.0</i><i>4.0</i><i class="g">3.0</i><i>3.0</i><i>4.5</i><i class="g">4.5</i><i>3.0</i><i>4.5</i><i class="g">3.5</i><i>3.0</i><i>4.5</i><i class="g">4.5</i><i>3.8</i><i>3.8</i><i>B+</i><i>3.2</i><i>3.5</i><i>3.1</i><i>3.6</i><i>3.6</i><i>2.8</i><i>3.5</i><i>4.1</i><i>3.3</i><i>3.5</i><i class="g">4.5</i><i>4.5</i><i>A+</i></p>
<p><b>ST06</b><b class="g">三次評価中</b><b>0022</b><b>山崎 翼</b><b>馬場 恵美</b><b>若竹 義之</b><i>3.5</i><i>3.0</i><i>3.0</i><i>4.5</i><i>4.5</i><i>2.5</i><i>3.0</i><i>4.5</i><i>3.0</i><i>4.5</i><i>3.5</i><i>3.0</i><i>4.5</i><i>2.5</i><i>3.0</i><i>2.9</i><i class="g">3.9</i><i>B+</i><i>3.8</i><i>3.0</i><i>3.1</i><i>3.5</i><i>4.2</i><i>3.3</i><i>3.6</i><i>3.6</i><i>3.6</i><i>3.3</i><i>1.5</i><i class="g">1.5</i><i>D</i></p>
<p><b>ST06</b><b class="g">三次評価中</b><b>0026</b><b>阿部 悠真</b><b>馬場 恵美</b><b>若竹 義之</b><i>3.5</i><i>4.5</i><i>4.5</i><i>4.5</i><i>4.5</i><i>3.0</i><i>3.5</i><i>3.0</i><i>4.5</i><i>3.5</i><i>4.0</i><i>4.5</i><i>4.5</i><i>3.5</i><i>3.0</i><i>3.9</i><i class="g">3.9</i><i>B+</i><i>3.6</i><i>4.3</i><i>3.3</i><i>3.3</i><i>3.2</i><i>3.0</i><i>3.1</i><i>3.8</i><i>3.3</i><i>3.6</i><i>4.0</i><i class="g">3.5</i><i>B</i></p>
<p><b>ST06</b><b class="g">三次評価中</b><b>0027</b><b>石川 一樹</b><b>馬場 恵美</b><b>若竹 義之</b><i>4.5</i><i>4.0</i><i>3.5</i><i>4.0</i><i>3.0</i><i>4.0</i><i>5.0</i><i>4.0</i><i>4.5</i><i>4.5</i><i>4.5</i><i>4.5</i><i>5.0</i><i>4.5</i><i>5.0</i><i>4.3</i><i class="g">3.6</i><i>B</i><i>3.3</i><i>4.1</i><i>4.1</i><i>3.5</i><i>3.3</i><i>3.0</i><i>2.5</i><i>3.3</i><i>3.3</i><i>3.4</i><i>3.0</i><i class="g">3.0</i><i>B</i></p>
<p><b>ST05</b><b class="g">二次評価中</b><b>0028</b><b>山下 直樹</b><b>馬場 恵美</b><b>若竹 義之</b><i>2.5</i><i>3.0</i><i class="g">5.0</i><i>4.5</i><i>3.0</i><i class="g">4.5</i><i>2.5</i><i>2.5</i><i class="g">4.5</i><i>2.5</i><i>3.0</i><i class="g">3.5</i><i>3.5</i><i>2.5</i><i class="g">4.0</i><i>4.3</i><i>3.9</i><i>B+</i><i>2.6</i><i>3.1</i><i>3.1</i><i>3.2</i><i>4.1</i><i>3.5</i><i>3.8</i><i>3.2</i><i>3.4</i><i>3.2</i><i class="g">4.2</i><i>4.2</i><i>A</i></p>
<p><b>ST06</b><b class="g">三次評価中</b><b>0029</b><b>中島 浩二</b><b>馬場 恵美</b><b>若竹 義之</b><i>3.5</i><i>3.0</i><i>3.0</i><i>3.0</i><i>3.0</i><i>3.0</i><i>3.5</i><i>2.5</i><i>3.5</i><i>4.0</i><i>3.5</i><i>3.5</i><i>2.5</i><i>3.5</i><i>3.5</i><i>3.3</i><i class="g">4.1</i><i>B+</i><i>3.5</i><i>3.4</i><i>4.2</i><i>2.8</i><i>3.6</i><i>3.3</i><i>3.1</i><i>3.3</i><i>3.6</i><i>3.2</i><i>4.2</i><i class="g">4.2</i><i>A</i></p>
<p><b>ST06</b><b class="g">三次評価中</b><b>0019</b><b>林 浩二</b><b>馬場 恵美</b><b>若竹 義之</b><i>3.5</i><i>3.0</i><i>4.0</i><i>2.5</i><i>3.0</i><i>3.0</i><i>2.5</i><i>4.0</i><i>4.5</i><i>3.5</i><i>3.5</i><i>3.5</i><i>3.5</i><i>3.0</i><i>4.0</i><i>3.8</i><i class="g">4.3</i><i>A</i><i>3.3</i><i>3.4</i><i>3.5</i><i>3.5</i><i>3.8</i><i>3.1</i><i>2.7</i><i>3.5</i><i>3.3</i><i>3.3</i><i>4.0</i><i class="g">3.0</i><i>B</i></p>
<p><b>ST05</b><b class="g">二次評価中</b><b>0024</b><b>池田 一樹</b><b>馬場 恵美</b><b>若竹 義之</b><i>4.5</i><i>3.5</i><i class="g">3.0</i><i>2.5</i><i>4.5</i><i class="g">3.0</i><i>3.5</i><i>4.5</i><i class="g">2.5</i><i>3.5</i><i>4.0</i><i class="g">3.5</i><i>3.0</i><i>3.5</i><i class="g">4.5</i><i>3.3</i><i>3.9</i><i>B+</i><i>3.2</i><i>3.1</i><i>3.5</i><i>3.5</i><i>4.0</i><i>3.2</i><i>4.1</i><i>3.0</i><i>3.7</i><i>3.2</i><i class="g">3.0</i><i>3.0</i><i>B</i></p>
<p><b>ST04</b><b class="g">一次評価中</b><b>0200</b><b>馬場 恵美</b><b>若竹 義之</b><b>菱谷 茂</b><i>2.5</i><i class="g">2.5</i><i>4.0</i><i>3.0</i><i class="g">3.0</i><i>4.0</i><i>3.0</i><i class="g">4.5</i><i>4.0</i><i>4.5</i><i class="g">3.0</i><i>3.5</i><i>4.5</i><i class="g">3.5</i><i>3.5</i><i>3.8</i><i>4.3</i><i>A</i><i>3.7</i><i>4.0</i><i>3.6</i><i>3.8</i><i>3.5</i><i>4.0</i><i>3.3</i><i>3.8</i><i>3.5</i><i>3.9</i><i>4.8</i><i>4.8</i><i>S</i></p>
<p><b>ST06</b><b class="g">三次評価中</b><b>0018</b><b>木村 陽子</b><b>馬場 恵美</b><b>若竹 義之</b><i>5.0</i><i>4.0</i><i>5.0</i><i>5.0</i><i>5.0</i><i>5.0</i><i>4.0</i><i>4.5</i><i>4.5</i><i>4.0</i><i>4.0</i><i>4.5</i><i>4.0</i><i>4.5</i><i>5.0</i><i>4.8</i><i class="g">3.0</i><i>B</i><i>3.8</i><i>3.5</i><i>2.8</i><i>3.3</i><i>3.0</i><i>3.3</i><i>2.7</i><i>3.2</i><i>3.0</i><i>3.3</i><i>4.0</i><i class="g">3.5</i><i>B</i></p>
<p><b>ST06</b><b class="g">三次評価中</b><b>0021</b><b>清水 優子</b><b>馬場 恵美</b><b>若竹 義之</b><i>2.0</i><i>2.0</i><i>1.5</i><i>3.5</i><i>2.0</i><i>2.0</i><i>3.0</i><i>2.0</i><i>2.0</i><i>3.0</i><i>2.0</i><i>1.5</i><i>3.0</i><i>2.0</i><i>1.5</i><i>1.7</i><i class="g">4.0</i><i>B+</i><i>3.2</i><i>3.6</i><i>3.5</i><i>4.0</i><i>3.6</i><i>3.5</i><i>3.0</i><i>4.1</i><i>3.3</i><i>3.8</i><i>3.0</i><i class="g">2.0</i><i>C</i></p>
<p><b>ST03</b><b class="g">自己評価中</b><b>0035</b><b>藤田 健太郎</b><b>森本 和彦</b><b>若竹 義之</b><i class="g">4.5</i><i>4.0</i><i>2.0</i><i class="g">4.0</i><i>2.5</i><i>2.0</i><i class="g">2.5</i><i>3.0</i><i>2.5</i><i class="g">4.5</i><i>2.5</i><i>3.5</i><i class="g">4.5</i><i>4.5</i><i>3.5</i><i>2.7</i><i>3.9</i><i>B+</i><i>3.8</i><i>4.1</i><i>3.1</i><i>3.3</i><i>3.3</i><i>4.1</i><i>4.2</i><i>3.2</i><i>3.6</i><i>3.6</i><i>3.5</i><i>3.0</i><i>B</i></p>
<p><b>ST04</b><b class="g">一次評価中</b><b>0043</b><b>福田 一樹</b><b>森本 和彦</b><b>若竹 義之</b><i>3.0</i><i class="g">3.5</i><i>4.0</i><i>2.5</i><i class="g">3.5</i><i>4.0</i><i>3.0</i><i class="g">4.0</i><i>4.5</i><i>3.0</i><i class="g">3.5</i><i>4.0</i><i>3.0</i><i class="g">4.0</i><i>4.0</i><i>4.1</i><i>4.2</i><i>A</i><i>3.7</i><i>2.9</i><i>3.1</i><i>4.0</i><i>2.8</i><i>4.0</i><i>3.2</i><i>3.0</i><i>3.2</i><i>3.4</i><i>2.5</i><i>2.5</i><i>C</i></p>
<p><b>ST04</b><b class="g">一次評価中</b><b>0033</b><b>岡田 美香</b><b>森本 和彦</b><b>若竹 義之</b><i>2.5</i><i class="g">3.5</i><i>4.5</i><i>3.5</i><i class="g">3.0</i><i>3.0</i><i>4.0</i><i class="g">3.0</i><i>4.5</i><i>2.5</i><i class="g">3.5</i><i>3.5</i><i>3.5</i><i class="g">2.5</i><i>3.0</i><i>3.7</i><i>3.7</i><i>B</i><i>3.1</i><i>3.2</i><i>3.6</i><i>3.0</i><i>3.6</i><i>3.5</i><i>3.8</i><i>3.0</i><i>3.5</i><i>3.1</i><i>2.0</i><i>2.0</i><i>C</i></p>
<p><b>ST04</b><b class="g">一次評価中</b><b>0038</b><b>村上 悠真</b><b>森本 和彦</b><b>若竹 義之</b><i>3.0</i><i class="g">2.5</i><i>3.0</i><i>3.5</i><i class="g">4.0</i><i>3.0</i><i>3.0</i><i class="g">3.5</i><i>2.5</i><i>3.5</i><i class="g">4.5</i><i>3.0</i><i>2.5</i><i class="g">3.0</i><i>3.0</i><i>2.9</i><i>2.9</i><i>C</i><i>3.2</i><i>3.4</i><i>4.1</i><i>2.8</i><i>3.1</i><i>3.0</i><i>3.8</i><i>3.6</i><i>3.5</i><i>3.2</i><i>3.0</i><i>3.0</i><i>B</i></p>
<p><b>ST04</b><b class="g">一次評価中</b><b>0039</b><b>遠藤 玲奈</b><b>森本 和彦</b><b>若竹 義之</b><i>4.5</i><i class="g">4.0</i><i>5.0</i><i>3.0</i><i class="g">3.0</i><i>3.0</i><i>4.0</i><i class="g">4.5</i><i>3.0</i><i>4.5</i><i class="g">4.0</i><i>3.5</i><i>4.0</i><i class="g">3.0</i><i>4.5</i><i>3.8</i><i>3.8</i><i>B+</i><i>3.1</i><i>3.0</i><i>3.3</i><i>3.7</i><i>4.0</i><i>3.5</i><i>3.2</i><i>3.2</i><i>3.4</i><i>3.3</i><i>2.0</i><i>1.9</i><i>D</i></p>
</div>
</div>
<div id="tabs" class="a">
<svg class="a" style="left:26px;top:9px" width="6" height="9" viewBox="0 0 6 9"><path d="M5.500 0v9L.5 4.500z" fill="#c4c4c4"/></svg>
<svg class="a" style="left:55px;top:9px" width="6" height="9" viewBox="0 0 6 9"><path d="M.5 0v9l5-4.500z" fill="#c4c4c4"/></svg>
<div class="a" style="left:100px;top:-1px;width:67px;height:25px;background:#fff;border:1px solid #c6c6c6;border-top:0;border-bottom:2px solid #217346;color:#217346;text-align:center;font-size:13px;line-height:27px">List1_</div>
<div class="a" style="left:200px;top:5px;width:16px;height:16px;border:1px solid #6a6a6a;border-radius:8px"></div>
<div class="a" style="left:204px;top:12px;width:8px;height:2px;background:#6a6a6a"></div><div class="a" style="left:207px;top:9px;width:2px;height:8px;background:#6a6a6a"></div>
<div class="a" style="left:1480px;top:8px;width:2px;height:2px;background:#a6a6a6;box-shadow:0 4px 0 #a6a6a6,0 8px 0 #a6a6a6"></div>
<div class="box" style="left:1497px;top:7px;width:15px;height:15px;border-color:#c8c8c8"></div>
<svg class="a" style="left:1502px;top:10px" width="5" height="8" viewBox="0 0 5 8"><path d="M5 0v8L0 4z" fill="#555"/></svg>
<div class="box" style="left:1521px;top:7px;width:326px;height:15px;border-color:#c0c0c0"></div>
<div class="box" style="left:1884px;top:7px;width:15px;height:15px;border-color:#c8c8c8"></div>
<svg class="a" style="left:1889px;top:10px" width="5" height="8" viewBox="0 0 5 8"><path d="M0 0v8l5-4z" fill="#555"/></svg>
</div>
<div id="stat" class="a">
<span id="t17" style="position:absolute;white-space:nowrap;left:7px;top:3px;transform-origin:0 50%;transform:scaleX(0.9997);line-height:16px;font-size:12px">準備完了</span>
<svg class="a" style="left:75px;top:4px" width="14" height="13" viewBox="0 0 14 13"><rect x="0" y="0" width="5" height="4" fill="#666"/><path d="M2.500 2.500h11v10h-11z" fill="#f3f3f3" stroke="#666" stroke-width="1"/><path d="M5 6h2M8.500 6h3M5 8.500h2M8.500 8.500h3M5 10.800h2M8.500 10.800h3" stroke="#666" stroke-width="1"/><circle cx="2.500" cy="2.500" r="2.500" fill="#666"/></svg>
<div class="a" style="left:1635px;top:0;width:38px;height:21px;background:#c8c8c8"></div>
<svg class="a" style="left:1647px;top:4px" width="13" height="13" viewBox="0 0 13 13"><path d="M.5.5h12v12H.5zM4.500.5v12M8.500.5v12M.5 4.500h12M.5 8.500h12" fill="none" stroke="#555" stroke-width="1"/></svg>
<svg class="a" style="left:1685px;top:4px" width="14" height="13" viewBox="0 0 14 13"><path d="M.5.5h13v12H.5z" fill="none" stroke="#555" stroke-width="1"/><path d="M3.500 3.500h7v6h-7zM5 5.500h4M5 7.500h4" fill="none" stroke="#555" stroke-width="1"/></svg>
<svg class="a" style="left:1723px;top:4px" width="14" height="13" viewBox="0 0 14 13"><path d="M.5.5h13v12H.5" fill="none" stroke="#555" stroke-width="1"/><path d="M4.500.5v6.500h5V.5" fill="none" stroke="#555" stroke-width="1"/></svg>
<div class="a" style="left:1754px;top:10px;width:6px;height:2px;background:#555"></div>
<div class="a" style="left:1764px;top:10px;width:100px;height:1px;background:#8a8a8a"></div>
<div class="a" style="left:1814px;top:7px;width:1px;height:7px;background:#8a8a8a"></div>
<div class="a" style="left:1804px;top:5px;width:4px;height:11px;background:#555"></div>
<div class="a" style="left:1867px;top:10px;width:8px;height:2px;background:#555"></div><div class="a" style="left:1870px;top:7px;width:2px;height:8px;background:#555"></div>
<span class="a" style="left:1886px;top:2px;line-height:16px;font-size:12px;white-space:nowrap">85%</span>
</div>
</body></html>
